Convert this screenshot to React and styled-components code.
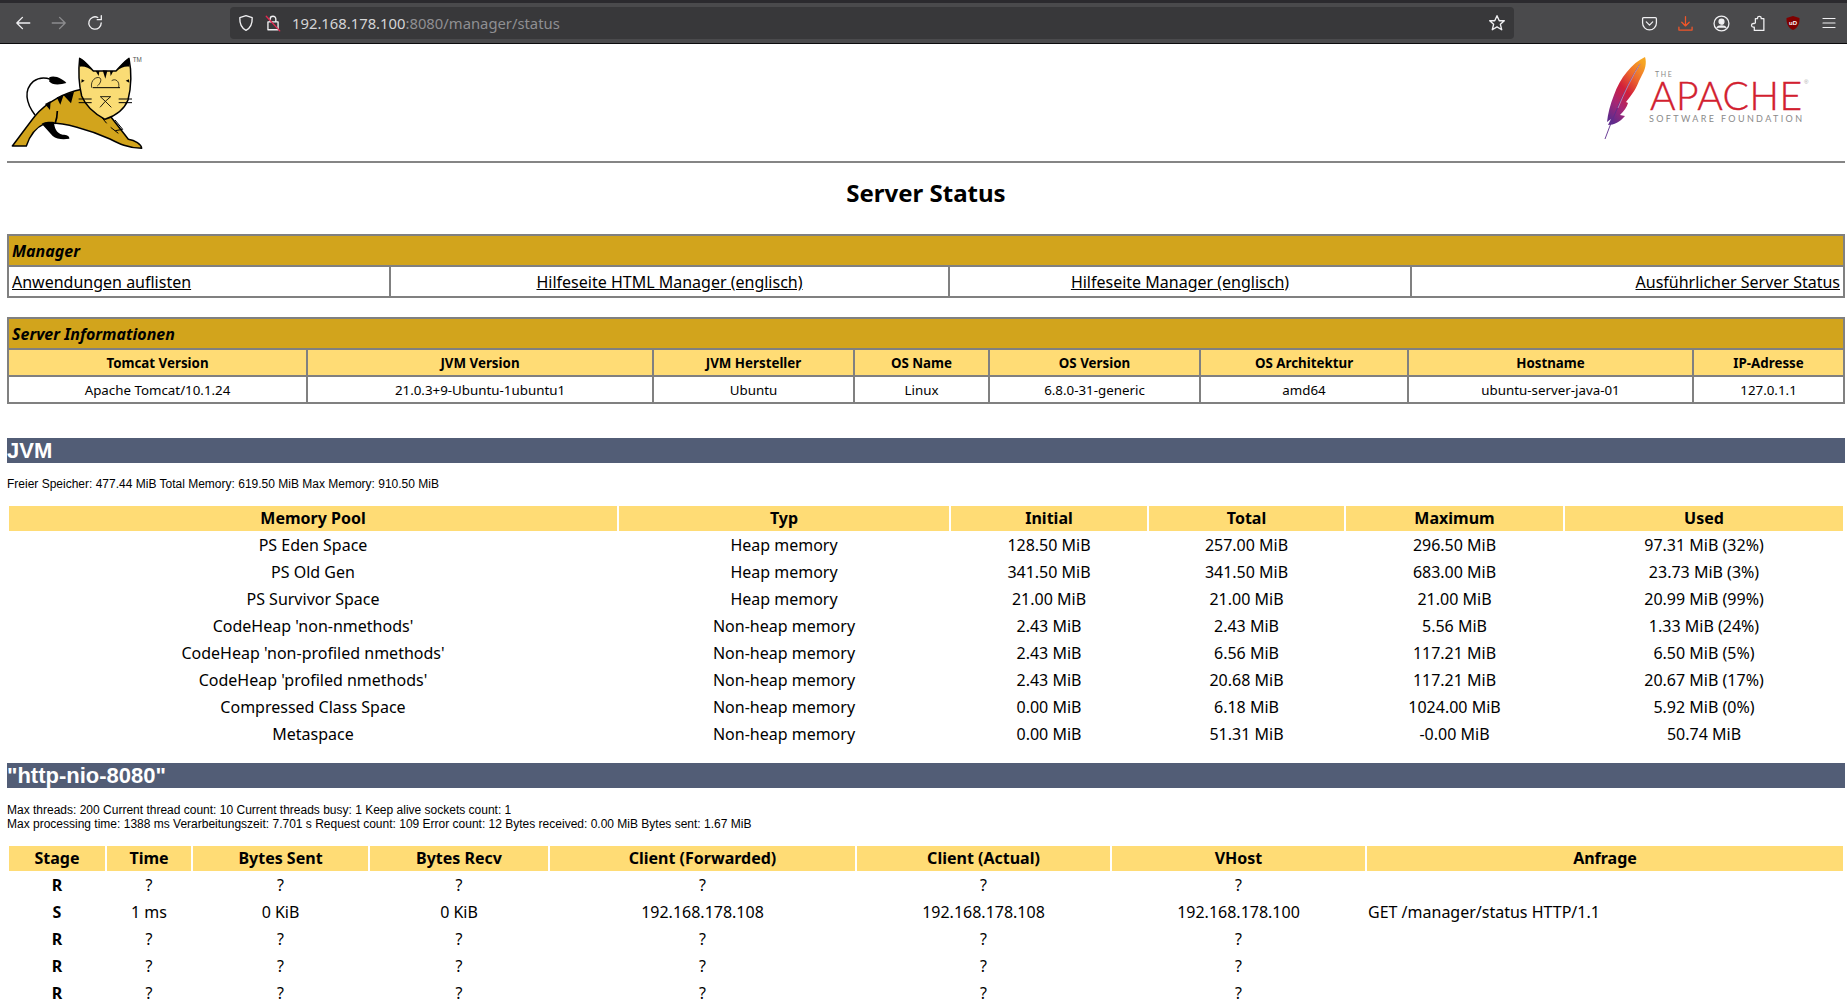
import React from "react"
import styled, { createGlobalStyle } from "styled-components"

const GlobalStyle = createGlobalStyle`
  html, body {
    margin: 0;
    height: 1001px;
    overflow: hidden;
    background: #fff;
    color: #000;
    font-family: "Noto Sans", sans-serif;
  }
`

const Toolbar = styled.div`
  height: 40px;
  border-top: 3px solid #2b2a2e;
  border-bottom: 1px solid #0c0c0d;
  background: #4a4a4c;
  display: flex;
  align-items: center;
  padding: 0 0 0 5px;
`

const ToolButton = styled.div`
  width: 36px;
  height: 36px;
  flex: none;
  display: flex;
  align-items: center;
  justify-content: center;
  color: ${(p) => p.$color || "#f0f0f2"};
  opacity: ${(p) => (p.$dim ? 0.4 : 1)};
`

const UrlBar = styled.div`
  flex: 1;
  height: 32px;
  margin: 0 117px 0 117px;
  border-radius: 4px;
  background: #38383a;
  display: flex;
  align-items: center;
  padding: 0 5px 0 1px;
  color: #f0f0f2;
`

const UrlIcon = styled.span`
  width: ${(p) => p.$w}px;
  flex: none;
  display: flex;
  justify-content: center;
`

const UrlText = styled.div`
  flex: 1;
  margin-left: 7px;
  font: 14.8px "Noto Sans", sans-serif;
  color: #d4d4d6;
  span {
    color: #8f8f92;
  }
`

const Page = styled.div`
  padding: 0 2px 0 7px;
`

const Banner = styled.div`
  height: 117px;
  border-bottom: 2px solid #858585;
  display: flex;
  justify-content: space-between;
  align-items: flex-start;
`

const CatLogo = styled.svg`
  display: block;
  margin: 6px 0 0 0;
`

const ApacheLogo = styled.svg`
  display: block;
  margin: 1px 15px 0 0;
`

const PageTitle = styled.div`
  height: 71px;
  padding-top: 13px;
  box-sizing: border-box;
  text-align: center;
  font-size: 24px;
  font-weight: 700;
  line-height: 33px;
`

const BoxTable = styled.table`
  width: 100%;
  table-layout: fixed;
  border-collapse: separate;
  border-spacing: 0;
  border: 1px solid #808080;
  margin-bottom: ${(p) => p.$gap}px;
`

const TitleCell = styled.td`
  background: #d2a41c;
  border: 1px solid #808080;
  padding: 4px 3px 2px;
  font-size: 16px;
  line-height: 23px;
  font-style: italic;
  font-weight: 700;
`

const LinkCell = styled.td`
  border: 1px solid #808080;
  padding: 4px 3px 2px;
  font-size: 16px;
  line-height: 23px;
  text-align: ${(p) => p.$align};
  a {
    color: #000;
    text-decoration: underline;
  }
`

const InfoHead = styled.td`
  background: #ffdc75;
  border: 1px solid #808080;
  padding: 4px 3px 2px;
  font-size: 13.33px;
  line-height: 19px;
  font-weight: 700;
  text-align: center;
`

const InfoCell = styled.td`
  border: 1px solid #808080;
  padding: 4px 3px 2px;
  font-size: 13.33px;
  line-height: 19px;
  text-align: center;
`

const Heading = styled.h1`
  margin: 0;
  height: 25px;
  background: #525d76;
  color: #fff;
  font: 700 22px/25px "Liberation Sans", Arial, sans-serif;
`

const Note = styled.p`
  margin: ${(p) => p.$top}px 0 ${(p) => p.$bottom}px;
  font: 12px/14px "Liberation Sans", Arial, sans-serif;
`

const DataTable = styled.table`
  width: 100%;
  table-layout: fixed;
  border-collapse: separate;
  border-spacing: 2px;
  margin-bottom: ${(p) => p.$gap}px;
`

const Col = styled.col`
  width: ${(p) => p.$w}px;
`

const DataHead = styled.th`
  background: #ffdc75;
  padding: 1px;
  height: 23px;
  box-sizing: content-box;
  font-size: 16px;
  line-height: 23px;
  font-weight: 700;
  text-align: center;
`

const DataCell = styled.td`
  padding: 1px;
  height: 23px;
  font-size: 16px;
  line-height: 23px;
  font-weight: ${(p) => (p.$bold ? 700 : 400)};
  text-align: ${(p) => (p.$left ? "left" : "center")};
  white-space: nowrap;
`

const Icon = ({ children, size = 18, width = 1.2 }) => (
  <svg width={size} height={size} viewBox="0 0 16 16" fill="none" stroke="currentColor" strokeWidth={width} strokeLinecap="round" strokeLinejoin="round">
    {children}
  </svg>
)

const CatMark = () => (
  <CatLogo width="141" height="100" viewBox="21 30 423 300">
    <path d="M105 225C78 190 70 150 100 124C115 113 135 112 152 118" fill="none" stroke="#000" strokeWidth="4.5" />
    <path d="M148 112C165 104 190 118 199 129C180 135 155 136 148 124Z" fill="#000" />
    <path d="M246 148C195 158 140 185 105 228C80 260 55 295 37 318L79 318C88 290 108 262 135 250C190 245 270 270 330 297C355 310 385 325 425 325C424 312 405 301 385 298L340 240L300 190Z" fill="#d2a41c" stroke="#000" strokeWidth="4.5" strokeLinejoin="round" />
    <path d="M125 251C135 245 150 245 162 246C163 262 168 280 188 284C200 284 209 288 208 296C190 299 170 298 158 288Z" fill="#000" />
    <path d="M172 213C172 226 170 238 165 252" fill="none" stroke="#000" strokeWidth="5" />
    <path d="M135 192L150 210L152 183ZM170 172L181 194L190 167ZM190 165L213 190L222 155Z" fill="#000" />
    <path d="M332 262L355 280M345 240L368 268L346 272M300 226L320 250" stroke="#000" strokeWidth="3" fill="none" />
    <path d="M239 55C252 60 268 80 280 93L348 93C360 80 375 62 387 55C394 90 394 140 384 180C372 210 345 228 315 238C285 222 258 200 245 168C236 130 235 90 239 55Z" fill="#fadc75" stroke="#000" strokeWidth="4.5" strokeLinejoin="round" />
    <path d="M239 55C252 60 268 80 280 94C266 82 252 78 240 80C238 72 238 62 239 55ZM387 55C375 62 360 80 348 94C362 82 376 78 388 80C389 72 388 62 387 55Z" fill="#000" />
    <path d="M308 91L316 116L322 92ZM287 93L296 108L298 93ZM330 93L332 108L340 93ZM245 118L254 122L244 128ZM387 118L377 122L388 128Z" fill="#000" />
    <path d="M275 143C270 120 290 108 300 114C306 120 300 132 292 138M356 143C360 122 345 115 335 122" fill="none" stroke="#000" strokeWidth="2.2" />
    <path d="M278 143H360M236 177H275M236 188H275M356 177H396M356 188H396" stroke="#000" strokeWidth="3" />
    <path d="M301 170H332L316 184ZM316 184L300 202M316 184L334 202" fill="none" stroke="#000" strokeWidth="2.6" />
    <text x="398" y="66" fontFamily="Liberation Sans, sans-serif" fontSize="19" fill="#555">TM</text>
  </CatLogo>
)

const ApacheMark = () => (
  <ApacheLogo width="240" height="100" viewBox="0 0 240 100">
    <defs>
      <linearGradient id="feather" x1="0.8" y1="0" x2="0.2" y2="1">
        <stop offset="0" stopColor="#f6a623" />
        <stop offset="0.25" stopColor="#ee6a2c" />
        <stop offset="0.5" stopColor="#d2203a" />
        <stop offset="0.75" stopColor="#a52675" />
        <stop offset="1" stopColor="#5e2b8c" />
      </linearGradient>
    </defs>
    <path d="M55 12C42 18 30 33 24 50C20 60 18 68 17 77L21 74L18 80C24 80 30 77 35 71L30 70C34 66 37 62 38 58L36 57C42 50 47 42 49 36L52 30C55 25 57 18 55 12Z" fill="url(#feather)" />
    <path d="M50 19C38 38 26 64 15 94" fill="none" stroke="#5e2b8c" strokeWidth="0.9" />
    <path d="M50 19C42 32 34 48 28 63" fill="none" stroke="#fff" strokeOpacity="0.6" strokeWidth="0.7" />
    <text x="65" y="32" fontFamily="Lato, sans-serif" fontSize="7" letterSpacing="1.6" fill="#8a8a8a">THE</text>
    <text x="60" y="65" fontFamily="Lato, sans-serif" fontWeight="300" fontSize="39" fill="#d2202f" stroke="#d2202f" strokeWidth="0.4" textLength="152" lengthAdjust="spacing">APACHE</text>
    <text x="214" y="39" fontFamily="Liberation Sans, sans-serif" fontSize="6" fill="#aaa">®</text>
    <text x="59" y="77" fontFamily="Lato, sans-serif" fontSize="9" fill="#8a8a8a" textLength="153" lengthAdjust="spacing">SOFTWARE FOUNDATION</text>
  </ApacheLogo>
)

const Browser = () => (
  <Toolbar>
    <ToolButton>
      <Icon><path d="M14 8H2.5M7.5 3L2.5 8L7.5 13" /></Icon>
    </ToolButton>
    <ToolButton $dim>
      <Icon><path d="M2 8H13.5M8.5 3L13.5 8L8.5 13" /></Icon>
    </ToolButton>
    <ToolButton>
      <Icon><path d="M13.5 8A5.5 5.5 0 1 1 10.5 3.1M13.6 1.5V5H10" /></Icon>
    </ToolButton>
    <UrlBar>
      <UrlIcon $w={30}>
        <Icon><path d="M8 1.5L13.5 3.3C13.7 8.5 12 12.5 8 14.5C4 12.5 2.3 8.5 2.5 3.3Z" /></Icon>
      </UrlIcon>
      <UrlIcon $w={24}>
        <Icon>
          <path d="M5.5 7V4.5A2.5 2.5 0 0 1 10.5 4.5V7M3.5 7H12.5V14H3.5Z" />
          <path d="M2 2L14 15" stroke="#e22850" />
        </Icon>
      </UrlIcon>
      <UrlText>192.168.178.100<span>:8080/manager/status</span></UrlText>
      <UrlIcon $w={24}>
        <Icon><path d="M8 1.5L10 6H14.5L11 9.2L12.2 14L8 11.4L3.8 14L5 9.2L1.5 6H6Z" /></Icon>
      </UrlIcon>
    </UrlBar>
    <ToolButton>
      <Icon size={17}><path d="M2.5 2.5H13.5C14.2 2.5 14.5 3 14.5 3.6V7.5A6.5 6.5 0 0 1 1.5 7.5V3.6C1.5 3 1.8 2.5 2.5 2.5ZM5 6.5L8 9.5L11 6.5" /></Icon>
    </ToolButton>
    <ToolButton $color="#f0562a">
      <Icon size={17}><path d="M8 1.5V10M4.5 6.8L8 10.3L11.5 6.8M1.8 11.5V14.2H14.2V11.5" /></Icon>
    </ToolButton>
    <ToolButton>
      <Icon size={17}>
        <circle cx="8" cy="8" r="7" />
        <circle cx="8" cy="6.3" r="2.3" fill="currentColor" />
        <path d="M3.8 12C5 9.8 11 9.8 12.2 12" fill="currentColor" />
      </Icon>
    </ToolButton>
    <ToolButton>
      <Icon size={17}><path d="M6 3.5H8V2.8C8 0.8 11.5 0.8 11.5 2.8V3.5H14V14.5H5V11.5H4C1.8 11.5 1.8 8 4 8H5L6 7.5Z" /></Icon>
    </ToolButton>
    <ToolButton $color="#800000">
      <svg width="16" height="16" viewBox="0 0 16 16">
        <path d="M8 1L14.5 3C14.7 9 12.5 13 8 15C3.5 13 1.3 9 1.5 3Z" fill="currentColor" />
        <text x="8" y="9.5" textAnchor="middle" fontFamily="Liberation Sans, sans-serif" fontWeight="700" fontSize="6" fill="#fff">uD</text>
      </svg>
    </ToolButton>
    <ToolButton>
      <Icon size={16}><path d="M2 3.5H14M2 8H14M2 12.5H14" /></Icon>
    </ToolButton>
  </Toolbar>
)

const info = [
  ["Tomcat Version", "Apache Tomcat/10.1.24", 299],
  ["JVM Version", "21.0.3+9-Ubuntu-1ubuntu1", 346],
  ["JVM Hersteller", "Ubuntu", 201],
  ["OS Name", "Linux", 135],
  ["OS Version", "6.8.0-31-generic", 211],
  ["OS Architektur", "amd64", 208],
  ["Hostname", "ubuntu-server-java-01", 285],
  ["IP-Adresse", "127.0.1.1", 151],
]

const memoryCols = [608, 330, 196, 195, 217, 278]
const memoryHead = ["Memory Pool", "Typ", "Initial", "Total", "Maximum", "Used"]
const memoryRows = [
  ["PS Eden Space", "Heap memory", "128.50 MiB", "257.00 MiB", "296.50 MiB", "97.31 MiB (32%)"],
  ["PS Old Gen", "Heap memory", "341.50 MiB", "341.50 MiB", "683.00 MiB", "23.73 MiB (3%)"],
  ["PS Survivor Space", "Heap memory", "21.00 MiB", "21.00 MiB", "21.00 MiB", "20.99 MiB (99%)"],
  ["CodeHeap 'non-nmethods'", "Non-heap memory", "2.43 MiB", "2.43 MiB", "5.56 MiB", "1.33 MiB (24%)"],
  ["CodeHeap 'non-profiled nmethods'", "Non-heap memory", "2.43 MiB", "6.56 MiB", "117.21 MiB", "6.50 MiB (5%)"],
  ["CodeHeap 'profiled nmethods'", "Non-heap memory", "2.43 MiB", "20.68 MiB", "117.21 MiB", "20.67 MiB (17%)"],
  ["Compressed Class Space", "Non-heap memory", "0.00 MiB", "6.18 MiB", "1024.00 MiB", "5.92 MiB (0%)"],
  ["Metaspace", "Non-heap memory", "0.00 MiB", "51.31 MiB", "-0.00 MiB", "50.74 MiB"],
]

const threadCols = [96, 84, 175, 178, 305, 253, 253, 476]
const threadHead = ["Stage", "Time", "Bytes Sent", "Bytes Recv", "Client (Forwarded)", "Client (Actual)", "VHost", "Anfrage"]
const threadRows = [
  ["R", "?", "?", "?", "?", "?", "?", ""],
  ["S", "1 ms", "0 KiB", "0 KiB", "192.168.178.108", "192.168.178.108", "192.168.178.100", "GET /manager/status HTTP/1.1"],
  ["R", "?", "?", "?", "?", "?", "?", ""],
  ["R", "?", "?", "?", "?", "?", "?", ""],
  ["R", "?", "?", "?", "?", "?", "?", ""],
]

export default function App() {
  return (
    <>
      <GlobalStyle />
      <Browser />
      <Page>
        <Banner>
          <CatMark />
          <ApacheMark />
        </Banner>
        <PageTitle>Server Status</PageTitle>

        <BoxTable $gap={19}>
          <colgroup>
            <Col $w={382} />
            <Col $w={559} />
            <Col $w={462} />
            <Col />
          </colgroup>
          <tbody>
            <tr>
              <TitleCell colSpan={4}>Manager</TitleCell>
            </tr>
            <tr>
              <LinkCell $align="left"><a href="#list">Anwendungen auflisten</a></LinkCell>
              <LinkCell $align="center"><a href="#html">Hilfeseite HTML Manager (englisch)</a></LinkCell>
              <LinkCell $align="center"><a href="#manager">Hilfeseite Manager (englisch)</a></LinkCell>
              <LinkCell $align="right"><a href="#status">Ausführlicher Server Status</a></LinkCell>
            </tr>
          </tbody>
        </BoxTable>

        <BoxTable $gap={34}>
          <colgroup>
            {info.map(([head, , w]) => <Col key={head} $w={w} />)}
          </colgroup>
          <tbody>
            <tr>
              <TitleCell colSpan={8}>Server Informationen</TitleCell>
            </tr>
            <tr>
              {info.map(([head]) => <InfoHead key={head}>{head}</InfoHead>)}
            </tr>
            <tr>
              {info.map(([head, value]) => <InfoCell key={head}>{value}</InfoCell>)}
            </tr>
          </tbody>
        </BoxTable>

        <Heading>JVM</Heading>
        <Note $top={14} $bottom={13}>Freier Speicher: 477.44 MiB Total Memory: 619.50 MiB Max Memory: 910.50 MiB</Note>
        <DataTable $gap={14}>
          <colgroup>
            {memoryCols.map((w, i) => <Col key={i} $w={w} />)}
          </colgroup>
          <thead>
            <tr>
              {memoryHead.map((h) => <DataHead key={h}>{h}</DataHead>)}
            </tr>
          </thead>
          <tbody>
            {memoryRows.map((row) => (
              <tr key={row[0]}>
                {row.map((cell, i) => <DataCell key={i}>{cell}</DataCell>)}
              </tr>
            ))}
          </tbody>
        </DataTable>

        <Heading>"http-nio-8080"</Heading>
        <Note $top={15} $bottom={0}>Max threads: 200 Current thread count: 10 Current threads busy: 1 Keep alive sockets count: 1</Note>
        <Note $top={0} $bottom={13}>Max processing time: 1388 ms Verarbeitungszeit: 7.701 s Request count: 109 Error count: 12 Bytes received: 0.00 MiB Bytes sent: 1.67 MiB</Note>
        <DataTable $gap={0}>
          <colgroup>
            {threadCols.map((w, i) => <Col key={i} $w={w} />)}
          </colgroup>
          <thead>
            <tr>
              {threadHead.map((h) => <DataHead key={h}>{h}</DataHead>)}
            </tr>
          </thead>
          <tbody>
            {threadRows.map((row, r) => (
              <tr key={r}>
                {row.map((cell, i) => (
                  <DataCell key={i} $bold={i === 0} $left={i === 7}>{cell}</DataCell>
                ))}
              </tr>
            ))}
          </tbody>
        </DataTable>
      </Page>
    </>
  )
}
